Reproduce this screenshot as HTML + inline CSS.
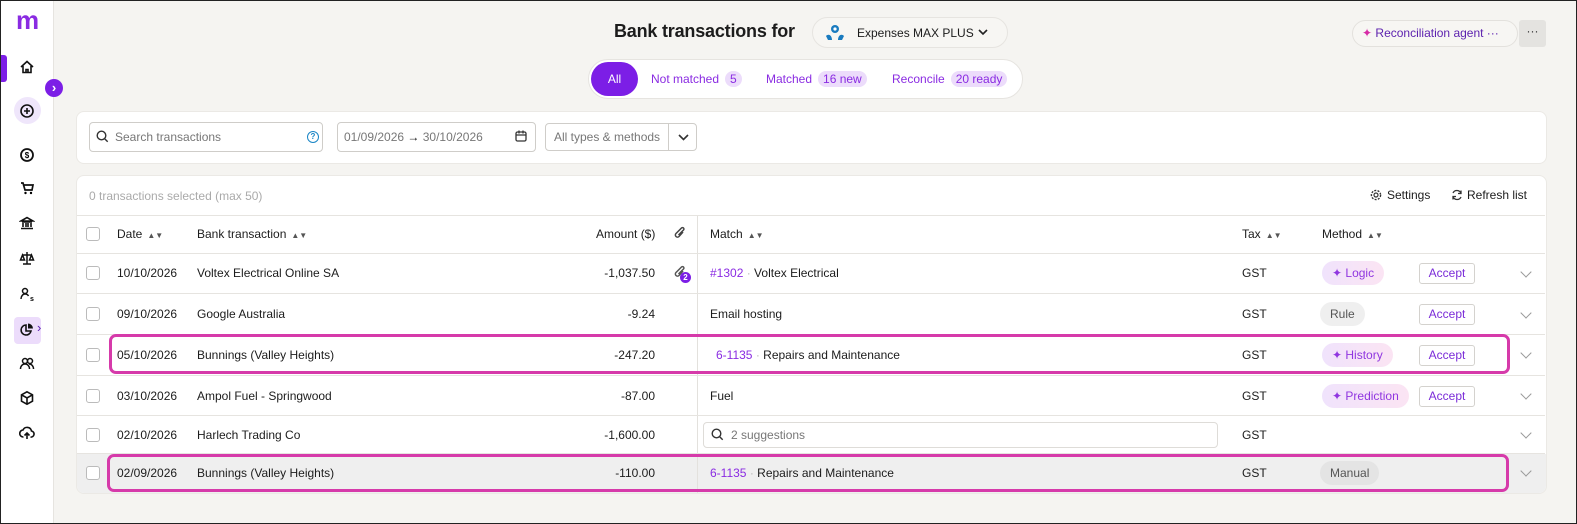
<!DOCTYPE html>
<html><head><meta charset="utf-8"><style>
*{box-sizing:border-box;margin:0;padding:0}
body{width:1577px;height:524px;overflow:hidden;font-family:"Liberation Sans",sans-serif;font-size:12px;color:#1c1c1c;background:#f5f4f1;position:relative}
.frame{position:absolute;left:0;top:0;width:1577px;height:524px;border:1px solid #222;pointer-events:none;z-index:50}
.a{position:absolute}
.side{left:0;top:0;width:54px;height:524px;background:#fff;border-right:1px solid #e6e4e0}
.ic{position:absolute;left:19px;width:16px;height:16px}
.card{background:#fff;border-radius:8px;border:1px solid #ebe9e5}
.inp{border:1px solid #cfcdc9;border-radius:4px;background:#fff;height:30px;color:#777;font-size:12px;line-height:28px}
.row{position:absolute;left:77px;width:1468px;border-top:1px solid #e6e4e0}
.t{position:absolute;white-space:nowrap}
.cb{position:absolute;left:86px;width:14px;height:14px;border:1px solid #bbb;border-radius:3px;background:#fff}
.pur{color:#8a2be2}
.pill{position:absolute;height:24px;border-radius:12px;padding:0 10px;line-height:24px;font-size:12px;white-space:nowrap}
.mg{background:linear-gradient(90deg,#f0e3fc,#fbe4f3);color:#9036e0}
.acc{position:absolute;left:1419px;width:56px;height:21px;border:1px solid #d4d2ce;border-radius:3px;text-align:center;line-height:19px;color:#7b2cd8;background:#fff}
.chev{position:absolute;left:1522px;width:8px;height:8px;border-right:1.5px solid #999;border-bottom:1.5px solid #999;transform:rotate(45deg)}
.hl{position:absolute;border:3px solid #d63aaa;border-radius:7px}
.sort{font-size:8px;color:#555;margin-left:5px}
.badge{display:inline-block;background:#ecdcfb;border-radius:9px;padding:0 5px;margin-left:6px;line-height:16px}
</style></head><body>
<div class="frame"></div>
<div class="a side">
 <div class="t" style="left:16px;top:5px;font-size:26px;font-weight:bold;color:#8a2be2;letter-spacing:-1px">m</div>
 <div class="a" style="left:0;top:55px;width:7px;height:27px;background:#7c1ee6;border-radius:0 3px 3px 0"></div>
 <svg class="ic" style="top:59px" viewBox="0 0 16 16"><path d="M2 8L8 2.5 14 8M4 7v6.5h8V7M7 13.5v-3h2v3" fill="none" stroke="#111" stroke-width="1.6"/></svg>
 <div class="a" style="left:14px;top:97px;width:27px;height:27px;border-radius:50%;background:#efe6fb"></div>
 <svg class="ic" style="top:103px" viewBox="0 0 16 16"><circle cx="8" cy="8" r="6" fill="none" stroke="#111" stroke-width="1.6"/><path d="M8 5v6M5 8h6" stroke="#111" stroke-width="1.6"/></svg>
 <svg class="ic" style="top:147px" viewBox="0 0 16 16"><circle cx="8" cy="8" r="6" fill="none" stroke="#111" stroke-width="1.8"/><text x="8" y="11" font-size="8" text-anchor="middle" font-weight="bold" font-family="Liberation Sans">$</text></svg>
 <svg class="ic" style="top:180px" viewBox="0 0 16 16"><path d="M2 3h2l2 7h7l1-5H5" fill="none" stroke="#111" stroke-width="1.7"/><circle cx="6.5" cy="13" r="1.2"/><circle cx="12" cy="13" r="1.2"/></svg>
 <svg class="ic" style="top:215px" viewBox="0 0 16 16"><path d="M2 6L8 2.5 14 6ZM3 7h10M4 8v4M7 8v4M9 8v4M12 8v4M2 13.5h12" fill="none" stroke="#111" stroke-width="1.6"/></svg>
 <svg class="ic" style="top:250px" viewBox="0 0 16 16"><path d="M8 2v12M4 14h8M3 5h10M1.5 10l2-5 2 5zM10.5 10l2-5 2 5z" fill="none" stroke="#111" stroke-width="1.5"/></svg>
 <svg class="ic" style="top:286px" viewBox="0 0 16 16"><circle cx="6" cy="5" r="2.5" fill="none" stroke="#111" stroke-width="1.5"/><path d="M2 13c0-3 2-5 4-5s3 1 3.5 2" fill="none" stroke="#111" stroke-width="1.5"/><text x="13" y="15" font-size="7" font-weight="bold" text-anchor="middle" font-family="Liberation Sans">s</text></svg>
 <div class="a" style="left:14px;top:317px;width:27px;height:27px;border-radius:4px;background:#ecdcfb"></div>
 <svg class="ic" style="top:322px" viewBox="0 0 16 16"><path d="M7 3a5 5 0 1 0 5 6H7z" fill="none" stroke="#111" stroke-width="1.6"/><path d="M9 1.5a5 5 0 0 1 5 5H9z" fill="#111"/></svg>
 <div class="t" style="left:37px;top:320px;color:#5a1fb0;font-size:13px">›</div>
 <svg class="ic" style="top:356px" viewBox="0 0 16 16"><circle cx="6" cy="5" r="2.5" fill="none" stroke="#111" stroke-width="1.5"/><circle cx="11" cy="5" r="2.5" fill="none" stroke="#111" stroke-width="1.5"/><path d="M1.5 13c0-3 2-5 4.5-5s4.5 2 4.5 5M10 8c2.5 0 4.5 2 4.5 5" fill="none" stroke="#111" stroke-width="1.5"/></svg>
 <svg class="ic" style="top:390px" viewBox="0 0 16 16"><path d="M8 1.8l5.5 3v6.4L8 14.2 2.5 11.2V4.8zM2.5 4.8L8 8l5.5-3.2M8 8v6" fill="none" stroke="#111" stroke-width="1.6"/></svg>
 <svg class="ic" style="top:425px" viewBox="0 0 16 16"><path d="M4.5 12A3.5 3.5 0 0 1 4 5a4.5 4.5 0 0 1 8.5 1 3 3 0 0 1-1 6M8 14V8M5.5 10.5L8 8l2.5 2.5" fill="none" stroke="#111" stroke-width="1.6"/></svg>
</div>
<div class="a" style="left:45px;top:79px;width:18px;height:18px;border-radius:50%;background:#7c1ee6;color:#fff;text-align:center;line-height:17px;font-size:13px;font-weight:bold">›</div>

<div class="t" style="left:614px;top:21px;font-size:18px;font-weight:bold;letter-spacing:-0.2px">Bank transactions for</div>
<div class="a" style="left:812px;top:17px;width:196px;height:31px;border:1px solid #e6e4e0;border-radius:16px;background:#f7f6f3"></div>
<svg class="a" style="left:825px;top:24px" width="20" height="18" viewBox="0 0 20 18"><circle cx="10" cy="5" r="4" fill="#1a7bbf"/><path d="M1 12c3-3 6 0 6 4H3zM19 12c-3-3-6 0-6 4h4z" fill="#1a7bbf"/><circle cx="10" cy="5" r="1.6" fill="#fff"/></svg>
<div class="t" style="left:857px;top:26px;font-size:12px">Expenses MAX PLUS</div>
<svg class="a" style="left:978px;top:29px" width="10" height="7" viewBox="0 0 10 7"><path d="M1 1l4 4 4-4" fill="none" stroke="#222" stroke-width="1.6"/></svg>

<div class="a" style="left:588px;top:59px;width:435px;height:40px;border:1px solid #e6e4e0;border-radius:20px;background:#fff"></div>
<div class="a" style="left:591px;top:62px;width:47px;height:34px;border-radius:17px;background:#7c1ee6;color:#fff;text-align:center;line-height:34px;font-size:12px">All</div>
<div class="t pur" style="left:651px;top:71px">Not matched<span class="badge">5</span></div>
<div class="t pur" style="left:766px;top:71px">Matched<span class="badge">16 new</span></div>
<div class="t pur" style="left:892px;top:71px">Reconcile<span class="badge">20 ready</span></div>

<div class="a" style="left:1352px;top:20px;width:166px;height:27px;border:1px solid #e3e1dd;border-radius:14px;background:#f7f6f3"></div>
<div class="t" style="left:1362px;top:26px;color:#5b1fae"><span style="color:#d62ba6">✦</span> Reconciliation agent ···</div>
<div class="a" style="left:1519px;top:20px;width:27px;height:27px;border-radius:3px;background:#e4e3e0;text-align:center;line-height:23px;color:#333">···</div>

<div class="a card" style="left:76px;top:111px;width:1471px;height:53px"></div>
<div class="a inp" style="left:89px;top:122px;width:234px;padding-left:25px">Search transactions</div>
<svg class="a" style="left:96px;top:130px" width="13" height="13" viewBox="0 0 13 13"><circle cx="5.5" cy="5.5" r="4.3" fill="none" stroke="#333" stroke-width="1.4"/><path d="M8.7 8.7l3 3" stroke="#333" stroke-width="1.4"/></svg>
<div class="a" style="left:307px;top:131px;width:12px;height:12px;border:1.5px solid #1b86c6;border-radius:50%;color:#1b86c6;font-size:8px;line-height:9px;text-align:center;font-weight:bold">?</div>
<div class="a inp" style="left:337px;top:122px;width:199px;padding-left:6px">01/09/2026 <b style="color:#111">→</b> 30/10/2026</div>
<svg class="a" style="left:515px;top:130px" width="12" height="12" viewBox="0 0 12 12"><rect x="1" y="2" width="10" height="9" rx="1.5" fill="none" stroke="#333" stroke-width="1.3"/><path d="M1 5h10M4 0.5v3M8 0.5v3" stroke="#333" stroke-width="1.3"/></svg>
<div class="a inp" style="left:545px;top:123px;width:152px;height:28px;line-height:26px;padding-left:8px">All types &amp; methods</div>
<div class="a" style="left:668px;top:124px;width:1px;height:26px;background:#cfcdc9"></div>
<svg class="a" style="left:678px;top:134px" width="11" height="7" viewBox="0 0 11 7"><path d="M1 1l4.5 4.5L10 1" fill="none" stroke="#333" stroke-width="1.6"/></svg>

<div class="a card" style="left:76px;top:175px;width:1471px;height:319px;overflow:hidden">
 <div class="a" style="left:0;top:278px;width:1471px;height:41px;background:#efefef"></div>
</div>
<div class="t" style="left:89px;top:189px;color:#aaa">0 transactions selected (max 50)</div>
<svg class="a" style="left:1370px;top:189px" width="12" height="12" viewBox="0 0 12 12"><circle cx="6" cy="6" r="2" fill="none" stroke="#333" stroke-width="1.2"/><circle cx="6" cy="6" r="4.6" fill="none" stroke="#333" stroke-width="1.4" stroke-dasharray="2 1.3"/></svg>
<div class="t" style="left:1387px;top:188px">Settings</div>
<svg class="a" style="left:1451px;top:189px" width="12" height="12" viewBox="0 0 12 12"><path d="M10 4.5A4.3 4.3 0 0 0 2 4M2 7.5A4.3 4.3 0 0 0 10 8M10 1.5v3H7M2 10.5v-3h3" fill="none" stroke="#333" stroke-width="1.3"/></svg>
<div class="t" style="left:1467px;top:188px">Refresh list</div>

<div class="row" style="top:215px;height:1px"></div>
<div class="a" style="left:697px;top:216px;width:1px;height:277px;background:#e3e1dd"></div>
<div class="cb" style="top:227px"></div>
<div class="t" style="left:117px;top:227px">Date<span class="sort">▲▼</span></div>
<div class="t" style="left:197px;top:227px">Bank transaction<span class="sort">▲▼</span></div>
<div class="t" style="left:596px;top:227px">Amount ($)</div>
<svg class="a" style="left:674px;top:226px" width="12" height="14" viewBox="0 0 12 14"><path d="M9 6l-4 4.5a2 2 0 0 1-3-3L7.5 2a1.4 1.4 0 0 1 2 2L4.5 9" fill="none" stroke="#444" stroke-width="1.5"/></svg>
<div class="t" style="left:710px;top:227px">Match<span class="sort">▲▼</span></div>
<div class="t" style="left:1242px;top:227px">Tax<span class="sort">▲▼</span></div>
<div class="t" style="left:1322px;top:227px">Method<span class="sort">▲▼</span></div>

<div class="row" style="top:253px;height:1px"></div>
<div class="row" style="top:293px;height:1px"></div>
<div class="row" style="top:334px;height:1px"></div>
<div class="row" style="top:375px;height:1px"></div>
<div class="row" style="top:415px;height:1px"></div>
<div class="row" style="top:453px;height:1px"></div>

<!-- row1 -->
<div class="cb" style="top:266px"></div>
<div class="t" style="left:117px;top:266px">10/10/2026</div>
<div class="t" style="left:197px;top:266px">Voltex Electrical Online SA</div>
<div class="t" style="left:655px;top:266px;transform:translateX(-100%)">-1,037.50</div>
<svg class="a" style="left:674px;top:265px" width="12" height="14" viewBox="0 0 12 14"><path d="M9 6l-4 4.5a2 2 0 0 1-3-3L7.5 2a1.4 1.4 0 0 1 2 2L4.5 9" fill="none" stroke="#555" stroke-width="1.5"/></svg>
<div class="a" style="left:680px;top:272px;width:11px;height:11px;border-radius:50%;background:#7c1ee6;color:#fff;font-size:8px;text-align:center;line-height:11px;font-weight:bold">2</div>
<div class="t" style="left:710px;top:266px"><span class="pur">#1302</span> <span style="color:#bbb">·</span> Voltex Electrical</div>
<div class="t" style="left:1242px;top:266px">GST</div>
<div class="pill mg" style="left:1322px;top:261px">✦ Logic</div>
<div class="acc" style="top:263px">Accept</div>
<div class="chev" style="top:268px"></div>
<!-- row2 -->
<div class="cb" style="top:307px"></div>
<div class="t" style="left:117px;top:307px">09/10/2026</div>
<div class="t" style="left:197px;top:307px">Google Australia</div>
<div class="t" style="left:655px;top:307px;transform:translateX(-100%)">-9.24</div>
<div class="t" style="left:710px;top:307px">Email hosting</div>
<div class="t" style="left:1242px;top:307px">GST</div>
<div class="pill" style="left:1320px;top:302px;background:#efefef;color:#555">Rule</div>
<div class="acc" style="top:304px">Accept</div>
<div class="chev" style="top:309px"></div>
<!-- row3 -->
<div class="cb" style="top:348px"></div>
<div class="t" style="left:117px;top:348px">05/10/2026</div>
<div class="t" style="left:197px;top:348px">Bunnings (Valley Heights)</div>
<div class="t" style="left:655px;top:348px;transform:translateX(-100%)">-247.20</div>
<div class="t" style="left:716px;top:348px"><span class="pur">6-1135</span> <span style="color:#bbb">·</span> Repairs and Maintenance</div>
<div class="t" style="left:1242px;top:348px">GST</div>
<div class="pill mg" style="left:1322px;top:343px">✦ History</div>
<div class="acc" style="top:345px">Accept</div>
<div class="chev" style="top:349px"></div>
<div class="hl" style="left:109px;top:334px;width:1401px;height:40px"></div>
<!-- row4 -->
<div class="cb" style="top:389px"></div>
<div class="t" style="left:117px;top:389px">03/10/2026</div>
<div class="t" style="left:197px;top:389px">Ampol Fuel - Springwood</div>
<div class="t" style="left:655px;top:389px;transform:translateX(-100%)">-87.00</div>
<div class="t" style="left:710px;top:389px">Fuel</div>
<div class="t" style="left:1242px;top:389px">GST</div>
<div class="pill mg" style="left:1322px;top:384px">✦ Prediction</div>
<div class="acc" style="top:386px">Accept</div>
<div class="chev" style="top:390px"></div>
<!-- row5 -->
<div class="cb" style="top:428px"></div>
<div class="t" style="left:117px;top:428px">02/10/2026</div>
<div class="t" style="left:197px;top:428px">Harlech Trading Co</div>
<div class="t" style="left:655px;top:428px;transform:translateX(-100%)">-1,600.00</div>
<div class="a inp" style="left:703px;top:422px;width:515px;height:26px;line-height:24px;padding-left:27px;border-color:#dedcd8">2 suggestions</div>
<svg class="a" style="left:711px;top:428px" width="13" height="13" viewBox="0 0 13 13"><circle cx="5.5" cy="5.5" r="4.3" fill="none" stroke="#333" stroke-width="1.4"/><path d="M8.7 8.7l3 3" stroke="#333" stroke-width="1.4"/></svg>
<div class="t" style="left:1242px;top:428px">GST</div>
<div class="chev" style="top:429px"></div>
<!-- row6 -->
<div class="cb" style="top:466px"></div>
<div class="t" style="left:117px;top:466px">02/09/2026</div>
<div class="t" style="left:197px;top:466px">Bunnings (Valley Heights)</div>
<div class="t" style="left:655px;top:466px;transform:translateX(-100%)">-110.00</div>
<div class="t" style="left:710px;top:466px"><span class="pur">6-1135</span> <span style="color:#bbb">·</span> Repairs and Maintenance</div>
<div class="t" style="left:1242px;top:466px">GST</div>
<div class="pill" style="left:1320px;top:461px;background:#e4e4e4;color:#555">Manual</div>
<div class="chev" style="top:467px"></div>
<div class="hl" style="left:107px;top:454px;width:1402px;height:38px"></div>
</body></html>
